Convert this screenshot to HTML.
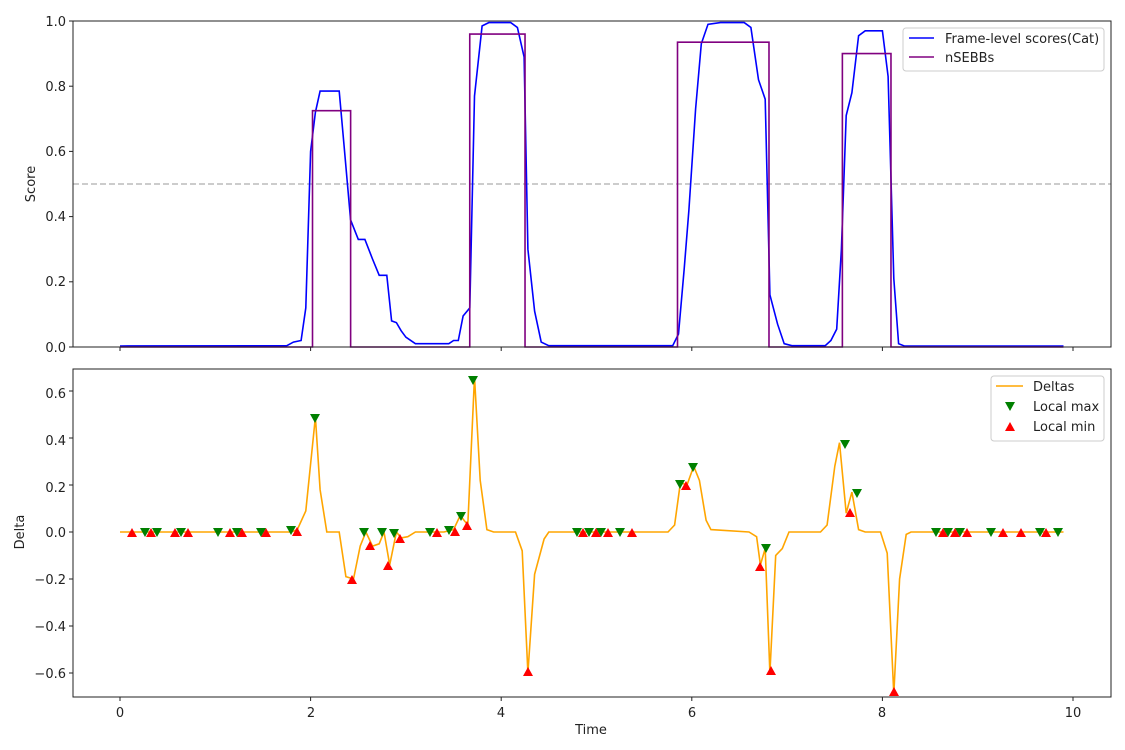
<!DOCTYPE html>
<html><head><meta charset="utf-8"><style>
html,body{margin:0;padding:0;background:#fff;}
svg{display:block;font-family:"DejaVu Sans","Liberation Sans",sans-serif;}
</style></head><body>
<svg id="s" width="1125" height="750" viewBox="0 0 1125 750" xmlns="http://www.w3.org/2000/svg">
<rect width="1125" height="750" fill="#fff"/>
<g id="gtop"></g>
<g id="gbot"></g>
<rect x="73" y="21" width="1038" height="326" fill="none" stroke="#222" stroke-width="1"/>
<rect x="73" y="369" width="1038" height="328" fill="none" stroke="#222" stroke-width="1"/>
<g font-size="13" fill="#222" text-anchor="end">
<text x="66" y="352">0.0</text><text x="66" y="286">0.2</text><text x="66" y="221">0.4</text><text x="66" y="156">0.6</text><text x="66" y="91">0.8</text><text x="66" y="26">1.0</text>
<text x="66" y="398">0.6</text><text x="66" y="445">0.4</text><text x="66" y="492">0.2</text><text x="66" y="537">0.0</text><text x="66" y="584">−0.2</text><text x="66" y="631">−0.4</text><text x="66" y="678">−0.6</text>
</g>
<g font-size="13" fill="#222" text-anchor="middle">
<text x="120" y="717">0</text><text x="311" y="717">2</text><text x="501" y="717">4</text><text x="692" y="717">6</text><text x="882" y="717">8</text><text x="1073" y="717">10</text>
<text x="591" y="734">Time</text>
<text transform="translate(35,184) rotate(-90)">Score</text>
<text transform="translate(24,532) rotate(-90)">Delta</text>
</g>
<g id="ticks" stroke="#222" stroke-width="1"></g>
<rect x="903" y="28" width="201" height="43" rx="3" fill="#fff" fill-opacity="0.85" stroke="#ccc"/>
<line x1="909" y1="38" x2="934" y2="38" stroke="#0000ff" stroke-width="1.6"/>
<line x1="909" y1="57" x2="934" y2="57" stroke="#800080" stroke-width="1.6"/>
<g font-size="13" fill="#222"><text x="945" y="43">Frame-level scores(Cat)</text><text x="945" y="62">nSEBBs</text></g>
<rect x="991" y="376" width="113" height="65" rx="3" fill="#fff" fill-opacity="0.85" stroke="#ccc"/>
<line x1="996" y1="386" x2="1023" y2="386" stroke="orange" stroke-width="1.6"/>
<polygon points="1005,402 1015,402 1010,411" fill="green"/>
<polygon points="1005,431 1015,431 1010,422" fill="red"/>
<g font-size="13" fill="#222"><text x="1033" y="391">Deltas</text><text x="1033" y="411">Local max</text><text x="1033" y="431">Local min</text></g>
</svg>
<script>
(function(){
var NS="http://www.w3.org/2000/svg";
function X(t){return 120+95.3*t;}
function Y(s){return 347-326*s;}
function D(d){return 532-235*d;}
function el(p,tag,a){var e=document.createElementNS(NS,tag);for(var k in a)e.setAttribute(k,a[k]);p.appendChild(e);return e;}
var gt=document.getElementById("gtop"),gb=document.getElementById("gbot"),tk=document.getElementById("ticks");
[0,2,4,6,8,10].forEach(function(t){el(tk,"line",{x1:X(t),y1:347,x2:X(t),y2:351});el(tk,"line",{x1:X(t),y1:697,x2:X(t),y2:701});});
[0,.2,.4,.6,.8,1].forEach(function(v){el(tk,"line",{x1:69,y1:Y(v),x2:73,y2:Y(v)});});
[.6,.4,.2,0,-.2,-.4,-.6].forEach(function(v){el(tk,"line",{x1:69,y1:D(v),x2:73,y2:D(v)});});
el(gt,"line",{x1:73,y1:Y(0.5),x2:1111,y2:Y(0.5),stroke:"#bbb","stroke-width":1.5,"stroke-dasharray":"6,3"});
var blue=[[0,0.003],[1.75,0.004],[1.82,0.015],[1.9,0.02],[1.95,0.12],[2.0,0.6],[2.05,0.72],[2.1,0.785],[2.3,0.785],[2.35,0.62],[2.42,0.39],[2.5,0.33],[2.57,0.33],[2.65,0.27],[2.72,0.22],[2.8,0.22],[2.85,0.08],[2.9,0.075],[2.95,0.05],[3.0,0.03],[3.1,0.01],[3.45,0.01],[3.5,0.02],[3.55,0.02],[3.6,0.095],[3.67,0.12],[3.72,0.77],[3.8,0.985],[3.87,0.995],[4.1,0.995],[4.17,0.98],[4.24,0.89],[4.28,0.3],[4.35,0.11],[4.42,0.015],[4.5,0.004],[5.8,0.004],[5.86,0.04],[5.92,0.24],[5.97,0.42],[6.04,0.73],[6.1,0.93],[6.17,0.99],[6.3,0.995],[6.55,0.995],[6.62,0.98],[6.7,0.82],[6.77,0.76],[6.82,0.16],[6.9,0.07],[6.97,0.01],[7.05,0.004],[7.4,0.004],[7.46,0.02],[7.52,0.055],[7.57,0.3],[7.62,0.71],[7.68,0.78],[7.75,0.955],[7.82,0.97],[8.0,0.97],[8.06,0.83],[8.12,0.21],[8.17,0.01],[8.23,0.003],[9.9,0.003]];
el(gt,"path",{d:"M"+blue.map(function(p){return X(p[0]).toFixed(1)+","+Y(p[1]).toFixed(1);}).join(" L"),fill:"none",stroke:"#0000ff","stroke-width":1.6});
var st=[[0,0],[2.02,0.725],[2.42,0],[3.67,0.96],[4.25,0],[5.85,0.935],[6.81,0],[7.58,0.9],[8.09,0],[9.9,0]];
var d="M"+X(0)+","+Y(0);
for(var i=1;i<st.length;i++){d+=" L"+X(st[i][0])+","+Y(st[i-1][1])+" L"+X(st[i][0])+","+Y(st[i][1]);}
el(gt,"path",{d:d,fill:"none",stroke:"#800080","stroke-width":1.6});
var del=[[0,0],[1.8,0],[1.86,0.01],[1.95,0.09],[2.05,0.49],[2.1,0.18],[2.17,0],[2.3,0],[2.37,-0.19],[2.45,-0.2],[2.52,-0.06],[2.58,0],[2.65,-0.06],[2.72,-0.05],[2.77,0],[2.83,-0.14],[2.9,0],[2.95,-0.025],[3.02,-0.02],[3.1,0],[3.4,0],[3.5,0.01],[3.57,0.07],[3.65,0.03],[3.72,0.66],[3.78,0.22],[3.85,0.01],[3.92,0],[4.15,0],[4.22,-0.08],[4.28,-0.6],[4.35,-0.18],[4.45,-0.03],[4.5,0],[5.75,0],[5.82,0.03],[5.88,0.21],[5.95,0.2],[6.02,0.28],[6.08,0.22],[6.15,0.05],[6.2,0.01],[6.6,0],[6.68,-0.02],[6.72,-0.14],[6.77,-0.07],[6.82,-0.6],[6.88,-0.1],[6.95,-0.07],[7.02,0],[7.35,0],[7.42,0.03],[7.5,0.28],[7.55,0.38],[7.62,0.08],[7.68,0.17],[7.75,0.01],[7.82,0],[7.98,0],[8.05,-0.09],[8.12,-0.69],[8.18,-0.2],[8.25,-0.01],[8.3,0],[9.9,0]];
el(gb,"path",{d:"M"+del.map(function(p){return X(p[0]).toFixed(1)+","+D(p[1]).toFixed(1);}).join(" L"),fill:"none",stroke:"orange","stroke-width":1.6});
var g=[[145,532],[157,532],[181,532],[218,532],[237,532],[261,532],[291,530],[315,418],[364,532],[382,532],[394,533],[430,532],[449,530],[461,516],[473,380],[577,532],[589,532],[601,532],[620,532],[680,484],[693,467],[766,548],[845,444],[857,493],[936,532],[948,532],[960,532],[991,532],[1040,532],[1058,532]];
var r=[[132,533],[151,533],[175,533],[188,533],[230,533],[242,533],[266,533],[297,532],[352,580],[370,546],[388,566],[400,539],[437,533],[455,532],[467,526],[528,672],[583,533],[596,533],[608,533],[632,533],[686,486],[760,567],[771,671],[850,513],[894,692],[943,533],[955,533],[967,533],[1003,533],[1021,533],[1046,533]];
g.forEach(function(p){el(gb,"polygon",{points:(p[0]-5)+","+(p[1]-4)+" "+(p[0]+5)+","+(p[1]-4)+" "+p[0]+","+(p[1]+5),fill:"green"});});
r.forEach(function(p){el(gb,"polygon",{points:(p[0]-5)+","+(p[1]+4)+" "+(p[0]+5)+","+(p[1]+4)+" "+p[0]+","+(p[1]-5),fill:"red"});});
})();
</script>
</body></html>
